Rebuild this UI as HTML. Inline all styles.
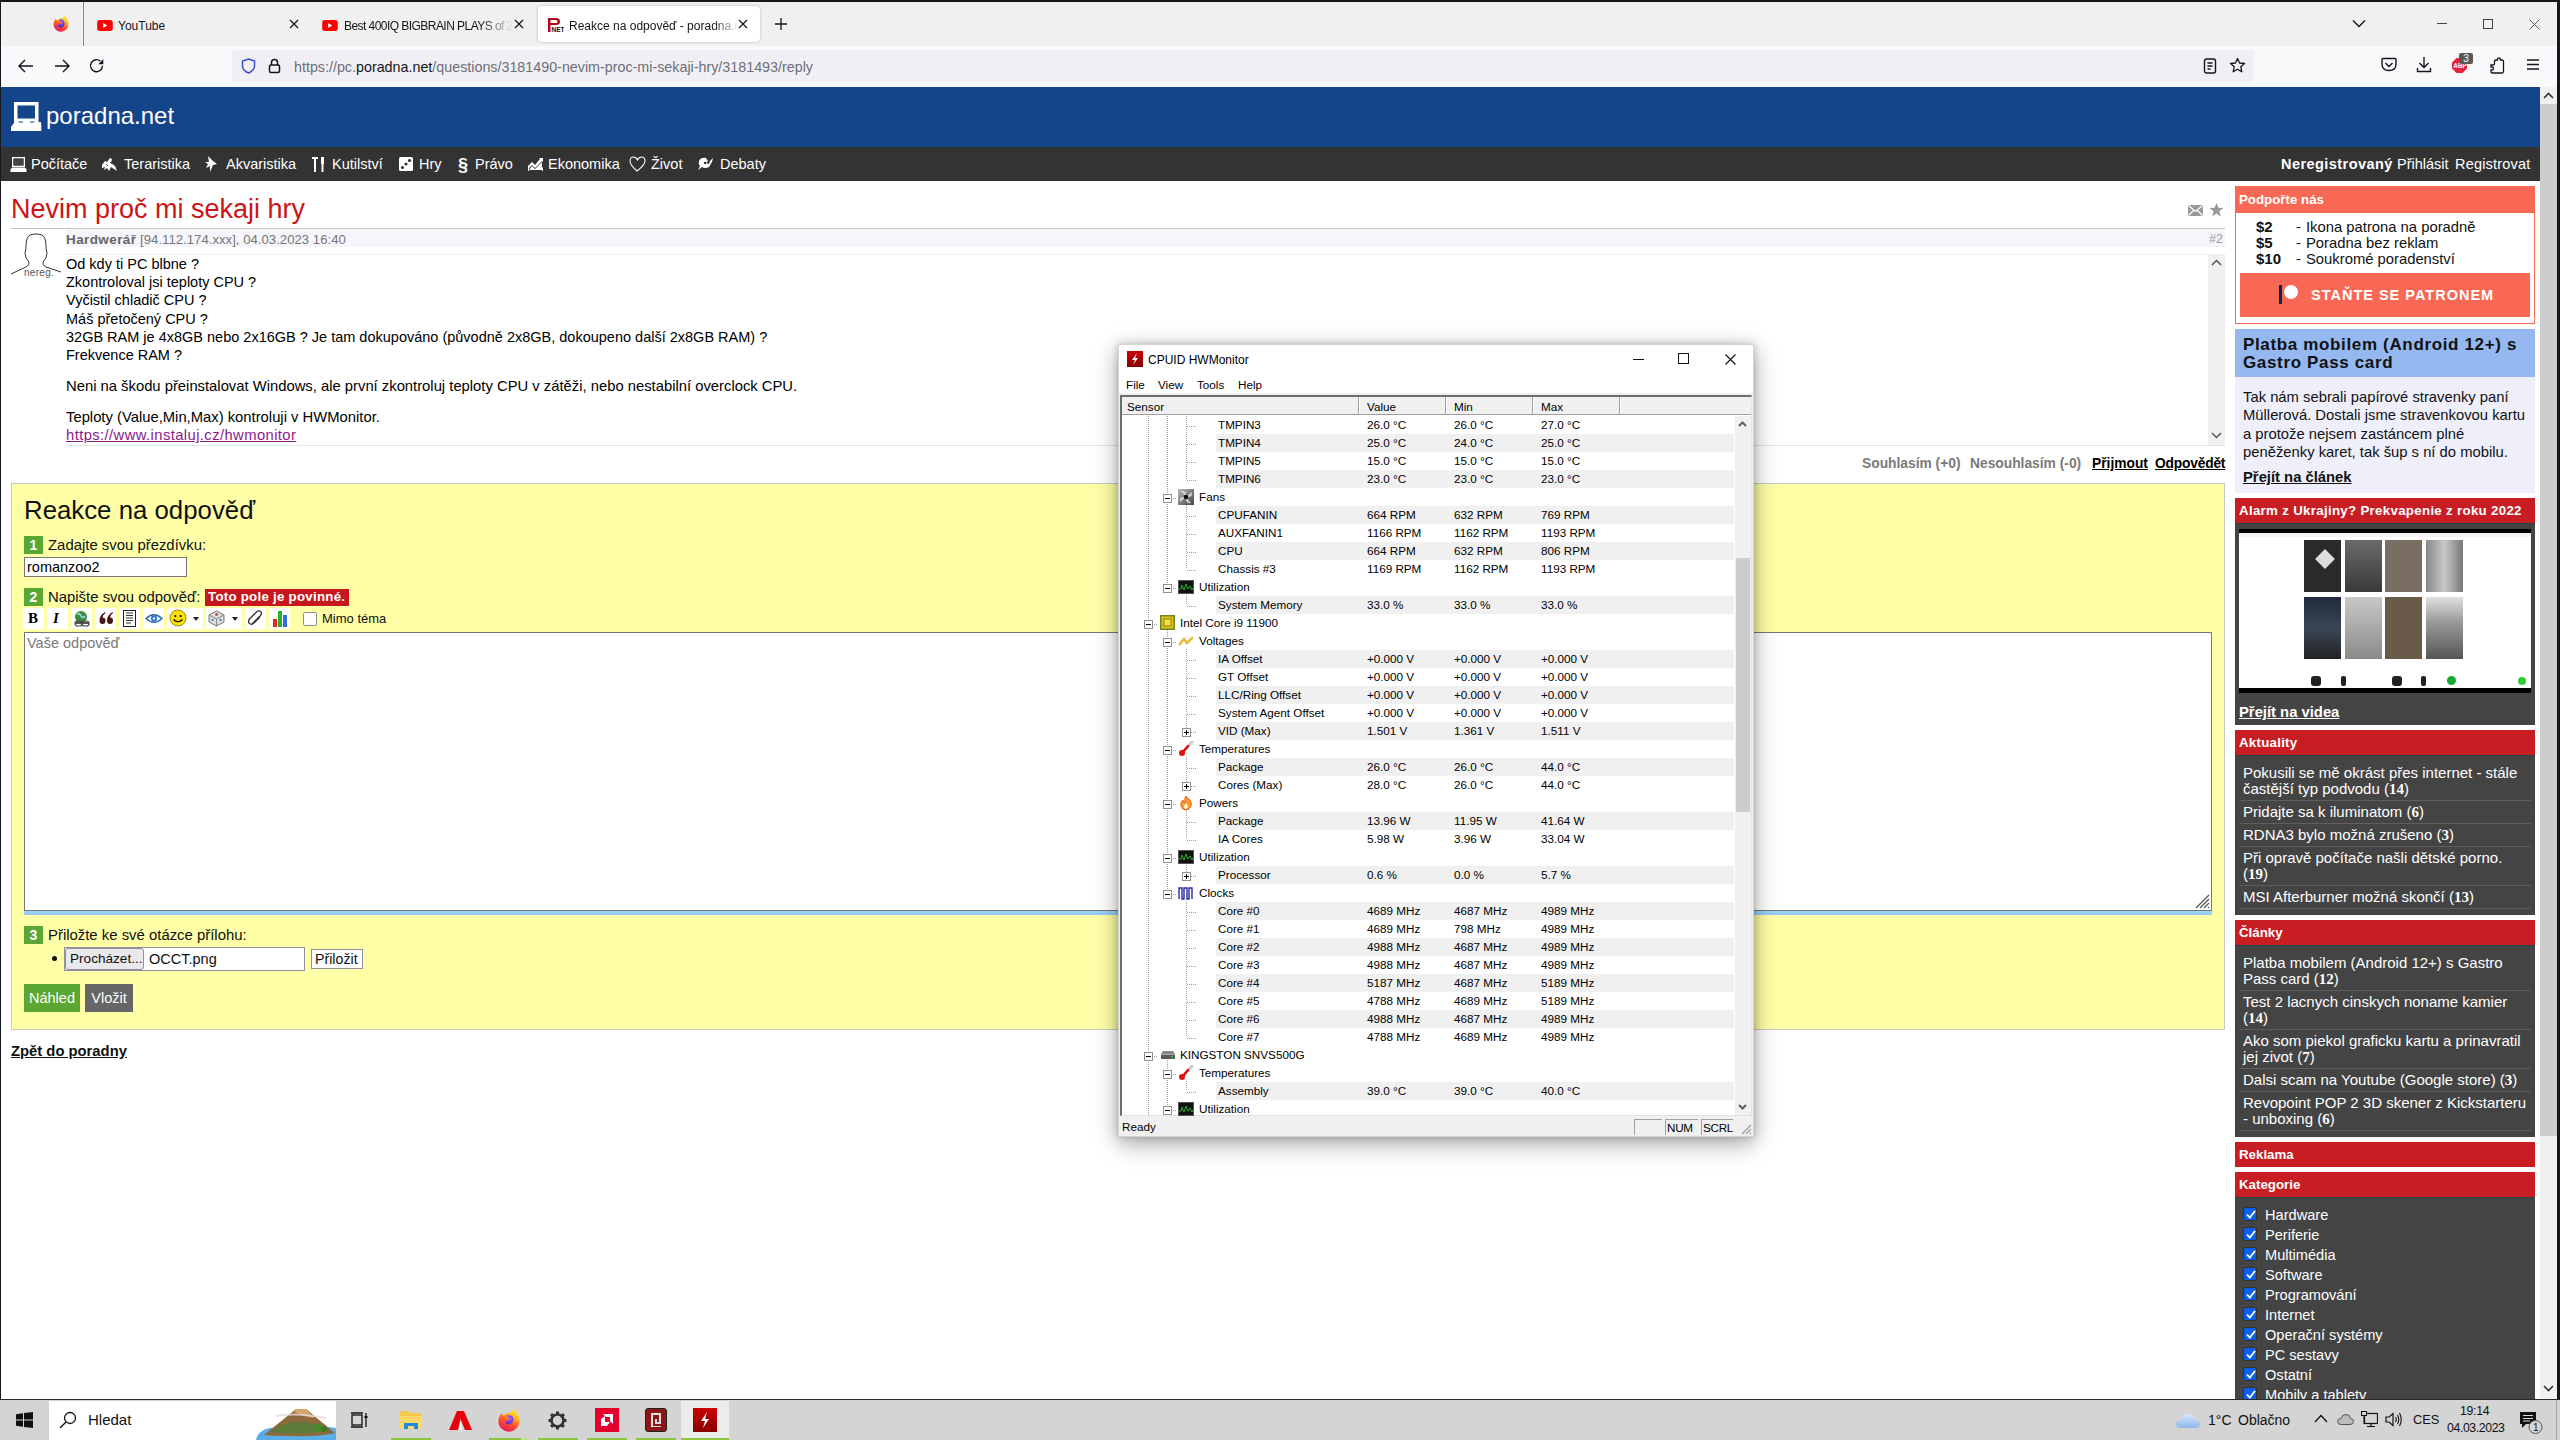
<!DOCTYPE html>
<html><head><meta charset="utf-8">
<style>
*{box-sizing:border-box}
html,body{margin:0;padding:0}
body{width:2560px;height:1440px;position:relative;overflow:hidden;background:#16161c;font-family:"Liberation Sans",sans-serif;color:#000}
.a{position:absolute}
.nw{white-space:nowrap}
.num{width:19px;height:18px;background:#5ba733;color:#fff;font-family:"Liberation Sans",sans-serif;font-weight:bold;font-size:14px;line-height:18px;text-align:center}
/* chrome */
#tabbar{left:1px;top:2px;width:2556px;height:44px;background:#f0f0f0}
#toolbar{left:1px;top:46px;width:2556px;height:41px;background:#f9f9fb}
#urlbar{left:232px;top:50px;width:2022px;height:32px;background:#f0f0f4;border-radius:4px}
.tabt{font-size:12px;color:#15141a;line-height:16px}
#page{left:1px;top:87px;width:2539px;height:1313px;background:#fff;overflow:hidden}
#vscroll{left:2540px;top:87px;width:17px;height:1313px;background:#f0f0f0}
#taskbar{left:0;top:1400px;width:2560px;height:40px;background:#d4d4d4}
/* page */
.sh{color:#fff;font-weight:bold;font-size:13.3px;line-height:25px;padding-left:4px}
.si{left:2243px;font-size:15px;line-height:16px;color:#fff}
.si b{font-family:"Liberation Serif",serif;font-size:15px}
.tl{left:2235px;width:300px;height:1px;background:#1e4848}
.sep{left:2239px;width:292px;height:1px;background:#5e5e5e}
.cb{left:2243px;width:14px;height:14px;background:#0b5ff0;border-radius:2px;border:1px solid #3b3020;padding:2px 0 0 1.5px;line-height:0}
.ct{left:2265px;font-size:14.6px;line-height:18px;color:#fff}
.v{font-family:"Liberation Sans",sans-serif;font-size:14.5px}
#hdr{left:0;top:0;width:2539px;height:60px;background:#14458a}
#nav{left:0;top:60px;width:2539px;height:34px;background:#333}
.navi{color:#fff;top:9px;font-size:14.5px}
</style></head>
<body>
<!-- firefox window -->

<div id="tabbar" class="a">
  <!-- firefox view icon -->
  <svg class="a" style="left:52px;top:13px" width="16" height="17" viewBox="0 0 16 17">
    <defs><linearGradient id="ffa" x1="0.85" y1="0" x2="0.35" y2="1"><stop offset="0" stop-color="#fff23a"/><stop offset="0.3" stop-color="#ffc020"/><stop offset="0.6" stop-color="#ff5a2a"/><stop offset="1" stop-color="#e8145a"/></linearGradient>
    <radialGradient id="ffb" cx="0.55" cy="0.35" r="0.7"><stop offset="0" stop-color="#b060ff"/><stop offset="1" stop-color="#2020d8"/></radialGradient></defs>
    <path d="M11 0.5Q15.5 4 15.5 9A7.5 7.5 0 0 1 0.5 9.5Q0.5 6 3 3.5Q3 5 4.5 5.5Q6 3 9 3.5Q11 2.5 11 0.5Z" fill="url(#ffa)"/>
    <path d="M6 4.5Q9.5 3.5 11 6Q12.2 8.5 11 10.8Q9.5 12.8 7 12.3Q5 11.8 4.8 9.8Q7 9.8 8 8.8Q8.3 6.5 6 4.5Z" fill="url(#ffb)"/>
  </svg>
  <div class="a" style="left:82px;top:0;width:1px;height:44px;background:#8a8a8a"></div>
  <!-- tab1 -->
  <svg class="a" style="left:96px;top:18px" width="16" height="11" viewBox="0 0 17 12"><rect x="0" y="0" width="17" height="12" rx="3" fill="#f00"/><path d="M6.5 3.3 L11 6 L6.5 8.7Z" fill="#fff"/></svg>
  <div class="a nw tabt" style="left:117px;top:16px">YouTube</div>
  <svg class="a" style="left:288px;top:17px" width="10" height="10" viewBox="0 0 10 10"><path d="M1 1L9 9M9 1L1 9" stroke="#15141a" stroke-width="1.2"/></svg>
  <!-- tab2 -->
  <svg class="a" style="left:321px;top:18px" width="16" height="11" viewBox="0 0 17 12"><rect x="0" y="0" width="17" height="12" rx="3" fill="#f00"/><path d="M6.5 3.3 L11 6 L6.5 8.7Z" fill="#fff"/></svg>
  <div class="a nw tabt" style="left:343px;top:16px;letter-spacing:-0.55px;width:170px;overflow:hidden;-webkit-mask-image:linear-gradient(90deg,#000 80%,transparent)">Best 400IQ BIGBRAIN PLAYS of 2022</div>
  <svg class="a" style="left:513px;top:17px" width="10" height="10" viewBox="0 0 10 10"><path d="M1 1L9 9M9 1L1 9" stroke="#15141a" stroke-width="1.2"/></svg>
  <!-- active tab -->
  <div class="a" style="left:537px;top:4px;width:222px;height:36px;background:#fff;border-radius:4px;box-shadow:0 0 3px rgba(0,0,0,.25)"></div>
  <svg class="a" style="left:546px;top:15px" width="17" height="16" viewBox="0 0 17 16"><path d="M1 1H9Q13 1 13 4.5Q13 8 9 8H3.5V15H1Z M3.5 3V6H9Q10.5 6 10.5 4.5Q10.5 3 9 3Z" fill="#b3001b"/><text x="4.5" y="15" font-family="Liberation Sans" font-weight="bold" font-size="6.5" fill="#111">NET</text></svg>
  <div class="a nw tabt" style="left:568px;top:16px;width:170px;overflow:hidden;-webkit-mask-image:linear-gradient(90deg,#000 85%,transparent)">Reakce na odpověď - poradna.net</div>
  <svg class="a" style="left:737px;top:17px" width="10" height="10" viewBox="0 0 10 10"><path d="M1 1L9 9M9 1L1 9" stroke="#15141a" stroke-width="1.2"/></svg>
  <svg class="a" style="left:773px;top:15px" width="14" height="14" viewBox="0 0 14 14"><path d="M7 1V13M1 7H13" stroke="#15141a" stroke-width="1.3"/></svg>
  <!-- right controls -->
  <svg class="a" style="left:2351px;top:17px" width="14" height="9" viewBox="0 0 14 9"><path d="M1 1.5L7 7.5L13 1.5" stroke="#15141a" stroke-width="1.4" fill="none"/></svg>
  <div class="a" style="left:2436px;top:21px;width:10px;height:1px;background:#444"></div>
  <div class="a" style="left:2482px;top:17px;width:10px;height:10px;border:1px solid #444"></div>
  <svg class="a" style="left:2528px;top:17px" width="11" height="11" viewBox="0 0 11 11"><path d="M.5 .5L10.5 10.5M10.5 .5L.5 10.5" stroke="#555" stroke-width="1"/></svg>
</div>
<div id="toolbar" class="a">
  <svg class="a" style="left:17px;top:13px" width="16" height="14" viewBox="0 0 16 14"><path d="M7 1L1 7L7 13M1.2 7H15" stroke="#15141a" stroke-width="1.4" fill="none"/></svg>
  <svg class="a" style="left:53px;top:13px" width="16" height="14" viewBox="0 0 16 14"><path d="M9 1L15 7L9 13M14.8 7H1" stroke="#15141a" stroke-width="1.4" fill="none"/></svg>
  <svg class="a" style="left:88px;top:12px" width="16" height="16" viewBox="0 0 16 16"><path d="M13.5 7.8A6 6 0 1 1 11.5 3.2" stroke="#15141a" stroke-width="1.4" fill="none"/><path d="M14.3 1.2V6.2H9.3Z" fill="#15141a"/></svg>
</div>
<div id="urlbar" class="a">
  <svg class="a" style="left:9px;top:8px" width="15" height="16" viewBox="0 0 15 16"><path d="M7.5 1L13.5 3V8Q13.5 12.5 7.5 15Q1.5 12.5 1.5 8V3Z" stroke="#3f49d0" stroke-width="1.5" fill="none"/></svg>
  <svg class="a" style="left:36px;top:8px" width="13" height="16" viewBox="0 0 13 16"><path d="M3.5 7V4.5A3 3 0 0 1 9.5 4.5V7" stroke="#15141a" stroke-width="1.5" fill="none"/><rect x="1.5" y="7" width="10" height="7.5" rx="1.5" stroke="#15141a" stroke-width="1.5" fill="none"/></svg>
  <div class="a nw" style="left:62px;top:8px;font-size:14.3px;line-height:18px;color:#6e6e78">https://pc.<span style="color:#15141a">poradna.net</span>/questions/3181490-nevim-proc-mi-sekaji-hry/3181493/reply</div>
  <svg class="a" style="left:1971px;top:8px" width="14" height="16" viewBox="0 0 14 16"><rect x="1.5" y="1" width="11" height="14" rx="2" stroke="#15141a" stroke-width="1.4" fill="none"/><path d="M4.5 5H9.5M4.5 8H9.5M4.5 11H7.5" stroke="#15141a" stroke-width="1.3"/></svg>
  <svg class="a" style="left:1997px;top:7px" width="17" height="17" viewBox="0 0 17 17"><path d="M8.5 1.5L10.6 6L15.5 6.5L11.8 9.8L12.8 14.8L8.5 12.3L4.2 14.8L5.2 9.8L1.5 6.5L6.4 6Z" stroke="#15141a" stroke-width="1.3" fill="none" stroke-linejoin="round"/></svg>
</div>
<div class="a" style="left:0;top:46px;width:2560px;height:41px;pointer-events:none">
  <svg class="a" style="left:2381px;top:11px" width="16" height="15" viewBox="0 0 16 15"><path d="M2 1.5H14Q15 1.5 15 2.5V7Q15 13.5 8 13.5Q1 13.5 1 7V2.5Q1 1.5 2 1.5Z" stroke="#15141a" stroke-width="1.4" fill="none"/><path d="M4.5 6L8 9.5L11.5 6" stroke="#15141a" stroke-width="1.4" fill="none"/></svg>
  <svg class="a" style="left:2416px;top:10px" width="16" height="17" viewBox="0 0 16 17"><path d="M8 1V11M3.5 7L8 11.5L12.5 7M1.5 12V15.5H14.5V12" stroke="#15141a" stroke-width="1.4" fill="none"/></svg>
  <svg class="a" style="left:2451px;top:11px" width="19" height="18" viewBox="0 0 19 18"><path d="M5.5 1H11.5L16 5.5V11.5L11.5 16H5.5L1 11.5V5.5Z" fill="#e8203c"/><text x="2.2" y="11.3" font-family="Liberation Sans" font-weight="bold" font-size="6.5" fill="#fff">ABP</text></svg>
  <div class="a" style="left:2459px;top:7px;width:14px;height:11px;background:#595959;border-radius:2px;color:#fff;font-size:10px;line-height:11px;text-align:center">3</div>
  <svg class="a" style="left:2489px;top:11px" width="16" height="17" viewBox="0 0 16 17"><path d="M2 8H4Q5.5 8 5.5 6.5V4.5Q5.5 3 7 3H8.5V2.5Q8.5 1 10 1Q11.5 1 11.5 2.5V3H13Q14.5 3 14.5 4.5V14.5Q14.5 16 13 16H3.5Q2 16 2 14.5V13H3Q4.5 13 4.5 11.5Q4.5 10 3 10H2Z" stroke="#15141a" stroke-width="1.3" fill="none"/></svg>
  <svg class="a" style="left:2526px;top:12px" width="14" height="13" viewBox="0 0 14 13"><path d="M1 2H13M1 6.5H13M1 11H13" stroke="#15141a" stroke-width="1.4"/></svg>
</div>

<!-- ===== PAGE ===== -->
<div id="page" class="a"></div>
<div class="a" style="left:1px;top:87px;width:2539px;height:60px;background:#14458a"></div>
<svg class="a" style="left:11px;top:101px" width="31" height="31" viewBox="0 0 31 31"><path d="M3 1H27.5V21H3Z M6.5 4.5V17.5H24V4.5Z" fill="#fff" fill-rule="evenodd"/><path d="M0 30V26L3.5 21H30L30.3 26V30Z" fill="#fff"/><path d="M7.5 21H12M19 21H23.5" stroke="#14458a" stroke-width="1"/></svg>
<div class="a nw" style="left:46px;top:101px;font-size:24px;color:#fff;line-height:30px">poradna.net</div>
<div class="a" style="left:1px;top:147px;width:2539px;height:34px;background:#333"></div>
<div class="a nw" style="left:0;top:155px;color:#fff;font-size:14.5px;line-height:18px">
  <svg class="a" style="left:10px;top:1px" width="17" height="17" viewBox="0 0 17 17"><path d="M2 1H15V11H2Z M3.5 2.5V9.5H13.5V2.5Z" fill="#fff" fill-rule="evenodd"/><rect x="3.5" y="2.5" width="10" height="7" fill="#444"/><path d="M0.5 16V13.5L2 11.5H15L16.5 13.5V16Z" fill="#fff"/></svg>
  <span class="a" style="left:31px">Počítače</span>
  <svg class="a" style="left:101px;top:1px" width="17" height="16" viewBox="0 0 17 16"><path d="M1 9L4 5L6 6L9 2L11 3L10 7L14 10L16 15L13 13L10 11L8 15L6 12L3 14L4 11L1 12Z" fill="#fff"/><path d="M5 8L7 10M9 6L11 8" stroke="#555" stroke-width="1"/></svg>
  <span class="a" style="left:124px">Teraristika</span>
  <svg class="a" style="left:205px;top:1px" width="13" height="16" viewBox="0 0 13 16"><path d="M3 0L8 5L12 8L8 9L5 16L5 10L1 12L3 8L0 6L4 6Z" fill="#fff"/></svg>
  <span class="a" style="left:226px">Akvaristika</span>
  <svg class="a" style="left:312px;top:1px" width="14" height="17" viewBox="0 0 14 17"><path d="M0 1H6V3H4V16H2V3H0Z M9 1H12V8H11.5V16H9.5V8H9Z" fill="#fff"/></svg>
  <span class="a" style="left:332px">Kutilství</span>
  <svg class="a" style="left:399px;top:2px" width="14" height="14" viewBox="0 0 14 14"><rect x="0" y="0" width="14" height="14" rx="1.5" fill="#fff"/><circle cx="3.5" cy="10.5" r="1.6" fill="#333"/><circle cx="7" cy="7" r="1.6" fill="#333"/><circle cx="10.5" cy="3.5" r="1.6" fill="#333"/></svg>
  <span class="a" style="left:419px">Hry</span>
  <span class="a" style="left:458px;font-size:18px;top:1px;font-weight:bold">§</span>
  <span class="a" style="left:475px">Právo</span>
  <svg class="a" style="left:528px;top:2px" width="15" height="14" viewBox="0 0 15 14"><path d="M0 14V9L4 5L7 8L12 2L11 1H15V5L14 4L7 11L4 8L1 11V14Z M0 14H15V10L14 11V14" fill="#fff"/><path d="M1 13L4 9L7 12L14 5V13Z" fill="#fff"/></svg>
  <span class="a" style="left:548px">Ekonomika</span>
  <svg class="a" style="left:629px;top:1px" width="17" height="16" viewBox="0 0 17 16"><path d="M8.5 4Q7 1 4.5 1Q1 1 1 5Q1 9 8 15Q16 9 16 5Q16 1 12.5 1Q10 1 8.5 4Z" stroke="#fff" stroke-width="1.1" fill="none"/></svg>
  <span class="a" style="left:651px">Život</span>
  <svg class="a" style="left:697px;top:1px" width="17" height="16" viewBox="0 0 17 16"><path d="M1 14L3 10Q1 8 2 5Q4 1 9 2L11 5L9 7L12 8L13 5L16 2L15 6L12 11Q8 13 5 11Z" fill="#fff"/><circle cx="8" cy="7" r="1.2" fill="#333"/></svg>
  <span class="a" style="left:720px">Debaty</span>
  <span class="a" style="left:2281px;font-weight:bold;letter-spacing:0.45px">Neregistrovaný</span>
  <span class="a" style="left:2397px">Přihlásit</span>
  <span class="a" style="left:2455px;letter-spacing:0.2px">Registrovat</span>
</div>

<!-- title -->
<div class="a nw" style="left:11px;top:193px;font-size:27px;line-height:32px;color:#cc1417">Nevim proč mi sekaji hry</div>
<svg class="a" style="left:2188px;top:205px" width="15" height="11" viewBox="0 0 15 11"><path d="M0 0H15V11H0Z" fill="#999"/><path d="M0.5 0.5L7.5 6.5L14.5 0.5M0.5 10.5L5.5 5.5M14.5 10.5L9.5 5.5" stroke="#fff" stroke-width="1.2" fill="none"/></svg>
<svg class="a" style="left:2209px;top:203px" width="15" height="14" viewBox="0 0 15 14"><path d="M7.5 0L9.3 4.8L14.5 5.1L10.4 8.3L11.8 13.5L7.5 10.6L3.2 13.5L4.6 8.3L0.5 5.1L5.7 4.8Z" fill="#999"/></svg>
<div class="a" style="left:11px;top:228px;width:2214px;height:1px;background:#c3c3c3"></div>
<div class="a" style="left:66px;top:229px;width:2159px;height:18px;background:#f5f5fb"></div>
<div class="a nw" style="left:66px;top:232px;font-size:13.2px;line-height:16px;color:#777"><b style="color:#666;font-size:13.5px;letter-spacing:0.4px">Hardwerář</b> [94.112.174.xxx], 04.03.2023 16:40</div>
<div class="a nw" style="left:2209px;top:231px;font-size:12.5px;line-height:16px;color:#999">#2</div>
<div class="a" style="left:66px;top:254px;width:2159px;height:1px;background:#eee"></div>
<!-- avatar -->
<svg class="a" style="left:10px;top:232px" width="52" height="46" viewBox="0 0 52 46"><path d="M1 42L16 35Q20 33 19 30Q15 26 15 21Q16 18 16 14Q16 5 20 3Q23 2 26 2Q29 2 32 3Q36 5 36 14Q36 18 37 21Q37 26 33 30Q32 33 36 35L51 40" stroke="#333" stroke-width="1" fill="none"/></svg>
<div class="a nw" style="left:24px;top:267px;font-size:10px;line-height:12px;color:#555;letter-spacing:0.3px">nereg.</div>
<!-- post body -->
<div class="a nw" style="left:66px;top:255px;font-size:14.5px;line-height:18.2px;color:#000">Od kdy ti PC blbne ?<br>Zkontroloval jsi teploty CPU ?<br>Vyčistil chladič CPU ?<br>Máš přetočený CPU ?<br>32GB RAM je 4x8GB nebo 2x16GB ? Je tam dokupováno (původně 2x8GB, dokoupeno další 2x8GB RAM) ?<br>Frekvence RAM ?</div>
<div class="a nw" style="left:66px;top:377px;font-size:14.8px;line-height:18px;color:#000;letter-spacing:0px">Neni na škodu přeinstalovat Windows, ale první zkontroluj teploty CPU v zátěži, nebo nestabilní overclock CPU.</div>
<div class="a nw" style="left:66px;top:408px;font-size:14.8px;line-height:18px;color:#000">Teploty (Value,Min,Max) kontroluji v HWMonitor.<br><span style="color:#8b1a8b;text-decoration:underline;letter-spacing:0.4px">https://www.instaluj.cz/hwmonitor</span></div>
<div class="a" style="left:2208px;top:255px;width:17px;height:191px;background:#f0f0f0"></div>
<svg class="a" style="left:2211px;top:259px" width="11" height="7" viewBox="0 0 11 7"><path d="M1 6L5.5 1.5L10 6" stroke="#555" stroke-width="1.5" fill="none"/></svg>
<svg class="a" style="left:2211px;top:432px" width="11" height="7" viewBox="0 0 11 7"><path d="M1 1L5.5 5.5L10 1" stroke="#555" stroke-width="1.5" fill="none"/></svg>
<div class="a" style="left:66px;top:445px;width:2159px;height:1px;background:#e3e3e3"></div>
<div class="a nw" style="left:1862px;top:456px;font-size:13.8px;line-height:16px;font-weight:bold;color:#7a7a7a"><span class="a" style="left:0">Souhlasím (+0)</span><span class="a" style="left:108px">Nesouhlasím (-0)</span><span class="a" style="left:230px;color:#000;text-decoration:underline">Přijmout</span><span class="a" style="left:293px;color:#000;text-decoration:underline;letter-spacing:-0.2px">Odpovědět</span></div>


<!-- ===== FORM ===== -->
<div class="a" style="left:11px;top:483px;width:2214px;height:547px;background:#ffffa8;border:1px solid #c8c8c8"></div>
<div class="a nw" style="left:24px;top:495px;font-size:25.8px;line-height:30px;color:#111">Reakce na odpověď</div>
<div class="a num" style="left:24px;top:536px">1</div>
<div class="a nw" style="left:48px;top:536px;font-size:14.9px;line-height:18px;color:#111">Zadajte svou přezdívku:</div>
<div class="a" style="left:24px;top:557px;width:163px;height:20px;background:#fff;border:1px solid #767676"></div>
<div class="a nw" style="left:27px;top:558px;font-size:14.5px;line-height:18px;color:#000">romanzoo2</div>
<div class="a num" style="left:24px;top:588px">2</div>
<div class="a nw" style="left:48px;top:588px;font-size:14.9px;line-height:18px;color:#111">Napište svou odpověď:</div>
<div class="a nw" style="left:205px;top:589px;width:144px;height:17px;background:#c8161d;color:#fff;font-weight:bold;font-size:13.3px;line-height:16px;padding-left:3px;letter-spacing:0.25px;overflow:hidden">Toto pole je povinné.</div>
<!-- editor toolbar -->
<div class="a" style="left:23px;top:608px;width:21px;height:21px;background:#fff"></div>
<div class="a" style="left:47px;top:608px;width:21px;height:21px;background:#fff"></div>
<div class="a" style="left:71px;top:608px;width:21px;height:21px;background:#fff"></div>
<div class="a" style="left:95px;top:608px;width:21px;height:21px;background:#fff"></div>
<div class="a" style="left:119px;top:608px;width:21px;height:21px;background:#fff"></div>
<div class="a" style="left:143px;top:608px;width:21px;height:21px;background:#fff"></div>
<div class="a" style="left:167px;top:608px;width:36px;height:21px;background:#fff"></div>
<div class="a" style="left:206px;top:608px;width:36px;height:21px;background:#fff"></div>
<div class="a" style="left:245px;top:608px;width:21px;height:21px;background:#fff"></div>
<div class="a" style="left:269px;top:608px;width:21px;height:21px;background:#fff"></div>
<div class="a nw" style="left:28px;top:610px;font-family:'Liberation Serif',serif;font-weight:bold;font-size:15px;line-height:17px">B</div>
<div class="a nw" style="left:53px;top:610px;font-family:'Liberation Serif',serif;font-weight:bold;font-style:italic;font-size:15px;line-height:17px">I</div>
<svg class="a" style="left:73px;top:610px" width="18" height="18" viewBox="0 0 18 18"><circle cx="8" cy="7" r="6" fill="#3a8f3a"/><path d="M4 4Q7 3 8 6Q10 9 12 6" stroke="#9fd3ff" stroke-width="1.5" fill="none"/><path d="M3 13H8M10 13H15" stroke="#555" stroke-width="2.2" stroke-linecap="round"/><rect x="2" y="11" width="7" height="5" rx="2.5" stroke="#444" stroke-width="1.2" fill="none"/><rect x="9" y="11" width="7" height="5" rx="2.5" stroke="#444" stroke-width="1.2" fill="none"/></svg>
<svg class="a" style="left:99px;top:611px" width="15" height="14" viewBox="0 0 15 14"><path d="M3.5 13Q0.5 13 0.5 9.5Q0.5 4 6 1L6.5 2Q3.5 4 3.5 6.5Q6.5 6.5 6.5 9.5Q6.5 13 3.5 13Z M11 13Q8 13 8 9.5Q8 4 13.5 1L14 2Q11 4 11 6.5Q14 6.5 14 9.5Q14 13 11 13Z" fill="#4a1616"/></svg>
<svg class="a" style="left:123px;top:610px" width="13" height="17" viewBox="0 0 13 17"><rect x="0.5" y="0.5" width="12" height="16" fill="#fff" stroke="#222"/><path d="M3 3H10M3 5.5H10M3 8H10M3 10.5H10M3 13H8" stroke="#333" stroke-width="1"/></svg>
<svg class="a" style="left:145px;top:613px" width="18" height="11" viewBox="0 0 18 11"><path d="M1 5.5Q9 -2 17 5.5Q9 13 1 5.5Z" fill="#dff" stroke="#3465a4" stroke-width="1.3"/><circle cx="9" cy="5.5" r="3" fill="#2a6dd6"/><circle cx="9" cy="5.5" r="1.2" fill="#fff"/></svg>
<svg class="a" style="left:169px;top:609px" width="18" height="18" viewBox="0 0 18 18"><circle cx="9" cy="9" r="8" fill="#ffe000" stroke="#8a7000" stroke-width="0.8"/><circle cx="6.3" cy="7" r="1.1" fill="#000"/><circle cx="11.7" cy="7" r="1.1" fill="#000"/><path d="M4.5 10.5Q9 15 13.5 10.5" stroke="#000" stroke-width="1.1" fill="none"/></svg>
<svg class="a" style="left:193px;top:617px" width="6" height="4" viewBox="0 0 6 4"><path d="M0 0H6L3 4Z" fill="#222"/></svg>
<svg class="a" style="left:208px;top:610px" width="17" height="17" viewBox="0 0 17 17"><path d="M8.5 1L16 5V12L8.5 16L1 12V5Z" fill="#ddd" stroke="#555" stroke-width="0.8"/><path d="M1 5L8.5 9L16 5M8.5 9V16" stroke="#777" stroke-width="0.8" fill="none"/><circle cx="8.5" cy="4.5" r="1.3" fill="#d22"/><circle cx="4.5" cy="10" r="1" fill="#36c"/><circle cx="12.5" cy="10" r="1" fill="#36c"/></svg>
<svg class="a" style="left:232px;top:617px" width="6" height="4" viewBox="0 0 6 4"><path d="M0 0H6L3 4Z" fill="#222"/></svg>
<svg class="a" style="left:247px;top:610px" width="17" height="17" viewBox="0 0 17 17"><path d="M4 15L13.5 5.5Q15.5 3 13.5 1.5Q11.5 0 9.5 2L2.5 9Q0.5 11.5 2.5 13.5Q4.5 15 7 13L13 7" stroke="#333" stroke-width="1.3" fill="none"/></svg>
<svg class="a" style="left:272px;top:610px" width="16" height="17" viewBox="0 0 16 17"><rect x="1" y="9" width="4" height="8" fill="#e02b1f"/><rect x="6" y="1" width="4" height="16" fill="#28b228"/><rect x="11" y="5" width="4" height="12" fill="#2d6fe0"/></svg>
<div class="a" style="left:303px;top:612px;width:14px;height:14px;border:1.5px solid #8f8f9d;border-radius:2px;background:#fff"></div>
<div class="a nw" style="left:322px;top:611px;font-size:13px;line-height:16px;color:#111">Mimo téma</div>
<!-- textarea -->
<div class="a" style="left:24px;top:632px;width:2188px;height:279px;background:#fff;border:1px solid #767676"></div>
<div class="a nw" style="left:27px;top:634px;font-size:14.5px;line-height:18px;color:#7a7a7a">Vaše odpověď</div>
<svg class="a" style="left:2195px;top:894px" width="15" height="15" viewBox="0 0 15 15"><path d="M14 1L1 14M14 5L5 14M14 9L9 14M14 13L13 14" stroke="#555" stroke-width="1.3"/></svg>
<div class="a" style="left:24px;top:911px;width:2188px;height:4px;background:linear-gradient(#9ad6fb,#98c8f9)"></div>
<div class="a num" style="left:24px;top:926px">3</div>
<div class="a nw" style="left:48px;top:926px;font-size:14.9px;line-height:18px;color:#111">Přiložte ke své otázce přílohu:</div>
<div class="a" style="left:52px;top:956px;width:5px;height:5px;border-radius:50%;background:#111"></div>
<div class="a" style="left:64px;top:947px;width:241px;height:24px;background:#fff;border:1px solid #8f8f9d"></div>
<div class="a" style="left:65px;top:948px;width:79px;height:22px;background:#e9e9ed;border:1px solid #8f8f9d;border-radius:3px"></div>
<div class="a nw" style="left:70px;top:950px;font-size:13.6px;line-height:18px;color:#111">Procházet...</div>
<div class="a nw" style="left:149px;top:950px;font-size:14.5px;line-height:18px;color:#111">OCCT.png</div>
<div class="a" style="left:311px;top:949px;width:52px;height:20px;background:#fff;border:1px solid #8f8f9d"></div>
<div class="a nw" style="left:315px;top:950px;font-size:14.2px;line-height:18px;color:#111">Přiložit</div>
<div class="a nw" style="left:24px;top:984px;width:56px;height:28px;background:#5ba733;color:#fff;font-size:14.5px;line-height:28px;text-align:center">Náhled</div>
<div class="a nw" style="left:85px;top:984px;width:48px;height:28px;background:#666;color:#fff;font-size:14.5px;line-height:28px;text-align:center">Vložit</div>
<div class="a nw" style="left:11px;top:1042px;font-size:14.8px;line-height:18px;font-weight:bold;color:#111;text-decoration:underline">Zpět do poradny</div>


<!-- ===== SIDEBAR ===== -->
<div class="a" style="left:2235px;top:186px;width:300px;height:138px;border:1px solid #f96854;background:#fff"></div>
<div class="a nw sh" style="left:2235px;top:187px;width:300px;height:26px;background:#f96854">Podpořte nás</div>
<div class="a nw" style="left:2256px;top:219px;font-size:14.8px;line-height:16px;color:#111">
<b class="a" style="left:0;top:0;font-size:15px">$2</b><span class="a" style="left:40px;top:0">-</span><span class="a" style="left:50px;top:0">Ikona patrona na poradně</span>
<b class="a" style="left:0;top:16px;font-size:15px">$5</b><span class="a" style="left:40px;top:16px">-</span><span class="a" style="left:50px;top:16px">Poradna bez reklam</span>
<b class="a" style="left:0;top:32px;font-size:15px">$10</b><span class="a" style="left:40px;top:32px">-</span><span class="a" style="left:50px;top:32px">Soukromé poradenství</span>
</div>
<div class="a" style="left:2240px;top:273px;width:290px;height:44px;background:#f96854"></div>
<div class="a" style="left:2279px;top:285px;width:3px;height:19px;background:#052d49"></div>
<div class="a" style="left:2284px;top:285px;width:14px;height:14px;border-radius:50%;background:#fff"></div>
<div class="a nw" style="left:2311px;top:286px;font-size:14.5px;line-height:18px;font-weight:bold;color:#fff;letter-spacing:1px">STAŇTE SE PATRONEM</div>

<div class="a" style="left:2235px;top:329px;width:300px;height:48px;background:#94b8ef"></div>
<div class="a nw" style="left:2243px;top:336px;font-size:17px;line-height:18px;font-weight:bold;color:#111;letter-spacing:0.65px">Platba mobilem (Android 12+) s<br>Gastro Pass card</div>
<div class="a" style="left:2235px;top:377px;width:300px;height:116px;background:#efeffb"></div>
<div class="a nw" style="left:2243px;top:388px;font-size:14.8px;line-height:18.3px;color:#111">Tak nám sebrali papírové stravenky paní<br>Müllerová. Dostali jsme stravenkovou kartu<br>a protože nejsem zastáncem plné<br>peněženky karet, tak šup s ní do mobilu.</div>
<div class="a nw" style="left:2243px;top:468px;font-size:14.8px;line-height:18px;font-weight:bold;color:#111;text-decoration:underline">Přejít na článek</div>

<div class="a nw sh" style="left:2235px;top:498px;width:300px;height:25px;background:#c81e23;letter-spacing:0.3px">Alarm z Ukrajiny? Prekvapenie z roku 2022</div>
<div class="a" style="left:2235px;top:523px;width:300px;height:202px;background:#444"></div><div class="a tl" style="top:523px"></div>
<div class="a" style="left:2239px;top:529px;width:292px;height:164px;background:#000"></div>
<div class="a" style="left:2239px;top:533px;width:292px;height:155px;background:#fff"></div>
<div class="a" style="left:2239px;top:533px;width:292px;height:4px;background:#f4f4f4"></div>
<div class="a" style="left:2304px;top:540px;width:37px;height:52px;background:#2a2a2a"></div>
<div class="a" style="left:2345px;top:540px;width:37px;height:52px;background:linear-gradient(#6a6a68,#3a3a38)"></div>
<div class="a" style="left:2385px;top:540px;width:37px;height:52px;background:#7a6e62"></div>
<div class="a" style="left:2426px;top:540px;width:37px;height:52px;background:linear-gradient(90deg,#888,#c8c8c8 50%,#777)"></div>
<div class="a" style="left:2304px;top:597px;width:37px;height:62px;background:linear-gradient(#1e2a3a,#3a4658 50%,#222)"></div>
<div class="a" style="left:2345px;top:597px;width:37px;height:62px;background:linear-gradient(#c8c8c6,#8a8a88)"></div>
<div class="a" style="left:2385px;top:597px;width:37px;height:62px;background:#6a5a4a"></div>
<div class="a" style="left:2426px;top:597px;width:37px;height:62px;background:linear-gradient(#e0e0e0,#9a9a98 40%,#555)"></div>
<div class="a" style="left:2318px;top:552px;width:14px;height:14px;background:#ddd;transform:rotate(45deg)"></div>
<div class="a" style="left:2311px;top:676px;width:10px;height:10px;background:#222;border-radius:3px"></div>
<div class="a" style="left:2341px;top:676px;width:5px;height:10px;background:#222;border-radius:2px"></div>
<div class="a" style="left:2392px;top:676px;width:10px;height:10px;background:#222;border-radius:3px"></div>
<div class="a" style="left:2421px;top:676px;width:5px;height:10px;background:#222;border-radius:2px"></div>
<div class="a" style="left:2447px;top:676px;width:9px;height:9px;background:#1a3;border-radius:50%"></div>
<div class="a" style="left:2518px;top:677px;width:8px;height:8px;background:#3c3;border-radius:50%"></div>
<div class="a nw" style="left:2239px;top:703px;font-size:14.8px;line-height:18px;font-weight:bold;color:#fff;text-decoration:underline">Přejít na videa</div>

<div class="a nw sh" style="left:2235px;top:730px;width:300px;height:25px;background:#c81e23;letter-spacing:0.25px">Aktuality</div>
<div class="a" style="left:2235px;top:755px;width:300px;height:160px;background:#444"></div><div class="a tl" style="top:755px"></div>
<div class="a nw si" style="top:765px">Pokusili se mě okrást přes internet - stále<br>častější typ podvodu (<b>14</b>)</div>
<div class="a sep" style="top:800px"></div>
<div class="a nw si" style="top:804px">Pridajte sa k iluminatom (<b>6</b>)</div>
<div class="a sep" style="top:823px"></div>
<div class="a nw si" style="top:827px">RDNA3 bylo možná zrušeno (<b>3</b>)</div>
<div class="a sep" style="top:846px"></div>
<div class="a nw si" style="top:850px">Při opravě počítače našli dětské porno.<br>(<b>19</b>)</div>
<div class="a sep" style="top:885px"></div>
<div class="a nw si" style="top:889px">MSI Afterburner možná skončí (<b>13</b>)</div>
<div class="a sep" style="top:908px"></div>

<div class="a nw sh" style="left:2235px;top:920px;width:300px;height:25px;background:#c81e23">Články</div>
<div class="a" style="left:2235px;top:945px;width:300px;height:192px;background:#444"></div><div class="a tl" style="top:945px"></div>
<div class="a nw si" style="top:955px">Platba mobilem (Android 12+) s Gastro<br>Pass card (<b>12</b>)</div>
<div class="a sep" style="top:990px"></div>
<div class="a nw si" style="top:994px">Test 2 lacnych cinskych noname kamier<br>(<b>14</b>)</div>
<div class="a sep" style="top:1029px"></div>
<div class="a nw si" style="top:1033px">Ako som piekol graficku kartu a prinavratil<br>jej zivot (<b>7</b>)</div>
<div class="a sep" style="top:1068px"></div>
<div class="a nw si" style="top:1072px">Dalsi scam na Youtube (Google store) (<b>3</b>)</div>
<div class="a sep" style="top:1091px"></div>
<div class="a nw si" style="top:1095px">Revopoint POP 2 3D skener z Kickstarteru<br>- unboxing (<b>6</b>)</div>
<div class="a sep" style="top:1130px"></div>

<div class="a nw sh" style="left:2235px;top:1142px;width:300px;height:25px;background:#c81e23">Reklama</div>
<div class="a nw sh" style="left:2235px;top:1172px;width:300px;height:25px;background:#c81e23">Kategorie</div>
<div class="a" style="left:2235px;top:1197px;width:300px;height:203px;background:#444"></div><div class="a tl" style="top:1197px"></div>
<div class="a cb" style="top:1207px"><svg width="10" height="9" viewBox="0 0 10 9"><path d="M1 4.5L3.8 7.5L9 1" stroke="#fff" stroke-width="1.8" fill="none"/></svg></div><div class="a nw ct" style="top:1206px">Hardware</div>
<div class="a cb" style="top:1227px"><svg width="10" height="9" viewBox="0 0 10 9"><path d="M1 4.5L3.8 7.5L9 1" stroke="#fff" stroke-width="1.8" fill="none"/></svg></div><div class="a nw ct" style="top:1226px">Periferie</div>
<div class="a cb" style="top:1247px"><svg width="10" height="9" viewBox="0 0 10 9"><path d="M1 4.5L3.8 7.5L9 1" stroke="#fff" stroke-width="1.8" fill="none"/></svg></div><div class="a nw ct" style="top:1246px">Multimédia</div>
<div class="a cb" style="top:1267px"><svg width="10" height="9" viewBox="0 0 10 9"><path d="M1 4.5L3.8 7.5L9 1" stroke="#fff" stroke-width="1.8" fill="none"/></svg></div><div class="a nw ct" style="top:1266px">Software</div>
<div class="a cb" style="top:1287px"><svg width="10" height="9" viewBox="0 0 10 9"><path d="M1 4.5L3.8 7.5L9 1" stroke="#fff" stroke-width="1.8" fill="none"/></svg></div><div class="a nw ct" style="top:1286px">Programování</div>
<div class="a cb" style="top:1307px"><svg width="10" height="9" viewBox="0 0 10 9"><path d="M1 4.5L3.8 7.5L9 1" stroke="#fff" stroke-width="1.8" fill="none"/></svg></div><div class="a nw ct" style="top:1306px">Internet</div>
<div class="a cb" style="top:1327px"><svg width="10" height="9" viewBox="0 0 10 9"><path d="M1 4.5L3.8 7.5L9 1" stroke="#fff" stroke-width="1.8" fill="none"/></svg></div><div class="a nw ct" style="top:1326px">Operační systémy</div>
<div class="a cb" style="top:1347px"><svg width="10" height="9" viewBox="0 0 10 9"><path d="M1 4.5L3.8 7.5L9 1" stroke="#fff" stroke-width="1.8" fill="none"/></svg></div><div class="a nw ct" style="top:1346px">PC sestavy</div>
<div class="a cb" style="top:1367px"><svg width="10" height="9" viewBox="0 0 10 9"><path d="M1 4.5L3.8 7.5L9 1" stroke="#fff" stroke-width="1.8" fill="none"/></svg></div><div class="a nw ct" style="top:1366px">Ostatní</div>
<div class="a cb" style="top:1387px"><svg width="10" height="9" viewBox="0 0 10 9"><path d="M1 4.5L3.8 7.5L9 1" stroke="#fff" stroke-width="1.8" fill="none"/></svg></div><div class="a nw ct" style="top:1386px">Mobily a tablety</div>
<div class="a cb" style="top:1407px"><svg width="10" height="9" viewBox="0 0 10 9"><path d="M1 4.5L3.8 7.5L9 1" stroke="#fff" stroke-width="1.8" fill="none"/></svg></div><div class="a nw ct" style="top:1406px">Hry</div>

<div id="vscroll" class="a">
  <svg class="a" style="left:3px;top:5px" width="11" height="7" viewBox="0 0 11 7"><path d="M1 6L5.5 1.5L10 6" stroke="#333" stroke-width="1.6" fill="none"/></svg>
  <div class="a" style="left:0;top:17px;width:17px;height:1032px;background:#cdcdcd"></div>
  <svg class="a" style="left:3px;top:1298px" width="11" height="7" viewBox="0 0 11 7"><path d="M1 1L5.5 5.5L10 1" stroke="#333" stroke-width="1.6" fill="none"/></svg>
</div>
<div class="a" style="left:0;top:1399px;width:2560px;height:1px;background:#2a2a2a"></div>
<!--HWM-->
<div class="a" id="hwm" style="left:1118px;top:344px;width:636px;height:793px;background:#fff;border:1px solid #d4d4d4;box-shadow:0 6px 22px rgba(0,0,0,.38),0 0 6px rgba(0,0,0,.18);font-size:11.7px;color:#000;overflow:hidden">
<svg class="a" style="left:8px;top:6px" width="16" height="16" viewBox="0 0 16 16"><defs><linearGradient id="hg" x1="0" y1="0" x2="0" y2="1"><stop offset="0" stop-color="#c00"/><stop offset="1" stop-color="#800"/></linearGradient></defs><rect width="16" height="16" fill="url(#hg)"/><path d="M10 2L5 9H8L6 14L11 7H8Z" fill="#fff"/></svg>
<div class="a nw" style="left:29px;top:7px;line-height:16px;font-size:12px">CPUID HWMonitor</div>
<div class="a" style="left:514px;top:14px;width:11px;height:1px;background:#111"></div>
<div class="a" style="left:559px;top:8px;width:11px;height:11px;border:1px solid #111"></div>
<svg class="a" style="left:606px;top:9px" width="11" height="11" viewBox="0 0 11 11"><path d="M.5 .5L10.5 10.5M10.5 .5L.5 10.5" stroke="#111" stroke-width="1.15"/></svg>
<div class="a nw" style="left:7px;top:32px;line-height:16px">File</div>
<div class="a nw" style="left:39px;top:32px;line-height:16px">View</div>
<div class="a nw" style="left:78px;top:32px;line-height:16px">Tools</div>
<div class="a nw" style="left:119px;top:32px;line-height:16px">Help</div>
<div class="a" style="left:0px;top:48px;width:634px;height:744px;background:#f0f0f0"></div>
<div class="a" style="left:1px;top:50px;width:632px;height:721px;background:#fff;border-top:2px solid #6d6d6d;border-left:2px solid #6d6d6d;border-right:1px solid #e3e3e3;border-bottom:1px solid #e3e3e3"></div>
<div class="a" style="left:3px;top:52px;width:629px;height:18px;background:#f0f0f0;border-bottom:1px solid #a0a0a0"></div>
<div class="a" style="left:239px;top:52px;width:1px;height:17px;background:#a0a0a0"></div><div class="a" style="left:240px;top:52px;width:1px;height:17px;background:#fff"></div>
<div class="a" style="left:326px;top:52px;width:1px;height:17px;background:#a0a0a0"></div><div class="a" style="left:327px;top:52px;width:1px;height:17px;background:#fff"></div>
<div class="a" style="left:413px;top:52px;width:1px;height:17px;background:#a0a0a0"></div><div class="a" style="left:414px;top:52px;width:1px;height:17px;background:#fff"></div>
<div class="a" style="left:500px;top:52px;width:1px;height:17px;background:#a0a0a0"></div><div class="a" style="left:501px;top:52px;width:1px;height:17px;background:#fff"></div>
<div class="a nw" style="left:8px;top:54px;line-height:16px">Sensor</div>
<div class="a nw" style="left:248px;top:54px;line-height:16px">Value</div>
<div class="a nw" style="left:335px;top:54px;line-height:16px">Min</div>
<div class="a nw" style="left:422px;top:54px;line-height:16px">Max</div>
<div class="a" style="left:97px;top:89px;width:518px;height:18px;background:#f0f0f0"></div>
<div class="a" style="left:97px;top:125px;width:518px;height:18px;background:#f0f0f0"></div>
<div class="a" style="left:97px;top:161px;width:518px;height:18px;background:#f0f0f0"></div>
<div class="a" style="left:97px;top:197px;width:518px;height:18px;background:#f0f0f0"></div>
<div class="a" style="left:97px;top:251px;width:518px;height:18px;background:#f0f0f0"></div>
<div class="a" style="left:97px;top:305px;width:518px;height:18px;background:#f0f0f0"></div>
<div class="a" style="left:97px;top:341px;width:518px;height:18px;background:#f0f0f0"></div>
<div class="a" style="left:97px;top:377px;width:518px;height:18px;background:#f0f0f0"></div>
<div class="a" style="left:97px;top:413px;width:518px;height:18px;background:#f0f0f0"></div>
<div class="a" style="left:97px;top:467px;width:518px;height:18px;background:#f0f0f0"></div>
<div class="a" style="left:97px;top:521px;width:518px;height:18px;background:#f0f0f0"></div>
<div class="a" style="left:97px;top:557px;width:518px;height:18px;background:#f0f0f0"></div>
<div class="a" style="left:97px;top:593px;width:518px;height:18px;background:#f0f0f0"></div>
<div class="a" style="left:97px;top:629px;width:518px;height:18px;background:#f0f0f0"></div>
<div class="a" style="left:97px;top:665px;width:518px;height:18px;background:#f0f0f0"></div>
<div class="a" style="left:97px;top:737px;width:518px;height:18px;background:#f0f0f0"></div>
<div class="a" style="left:29px;top:71px;width:1px;height:699px;background:repeating-linear-gradient(#a0a0a0 0 1px,transparent 1px 2px)"></div>
<div class="a" style="left:48px;top:71px;width:1px;height:171px;background:repeating-linear-gradient(#a0a0a0 0 1px,transparent 1px 2px)"></div>
<div class="a" style="left:48px;top:283px;width:1px;height:265px;background:repeating-linear-gradient(#a0a0a0 0 1px,transparent 1px 2px)"></div>
<div class="a" style="left:48px;top:715px;width:1px;height:55px;background:repeating-linear-gradient(#a0a0a0 0 1px,transparent 1px 2px)"></div>
<div class="a" style="left:67px;top:71px;width:1px;height:63px;background:repeating-linear-gradient(#a0a0a0 0 1px,transparent 1px 2px)"></div>
<div class="a" style="left:67px;top:160px;width:1px;height:64px;background:repeating-linear-gradient(#a0a0a0 0 1px,transparent 1px 2px)"></div>
<div class="a" style="left:67px;top:250px;width:1px;height:10px;background:repeating-linear-gradient(#a0a0a0 0 1px,transparent 1px 2px)"></div>
<div class="a" style="left:67px;top:304px;width:1px;height:82px;background:repeating-linear-gradient(#a0a0a0 0 1px,transparent 1px 2px)"></div>
<div class="a" style="left:67px;top:412px;width:1px;height:28px;background:repeating-linear-gradient(#a0a0a0 0 1px,transparent 1px 2px)"></div>
<div class="a" style="left:67px;top:466px;width:1px;height:28px;background:repeating-linear-gradient(#a0a0a0 0 1px,transparent 1px 2px)"></div>
<div class="a" style="left:67px;top:520px;width:1px;height:10px;background:repeating-linear-gradient(#a0a0a0 0 1px,transparent 1px 2px)"></div>
<div class="a" style="left:67px;top:556px;width:1px;height:136px;background:repeating-linear-gradient(#a0a0a0 0 1px,transparent 1px 2px)"></div>
<div class="a" style="left:67px;top:736px;width:1px;height:10px;background:repeating-linear-gradient(#a0a0a0 0 1px,transparent 1px 2px)"></div>
<div class="a" style="left:68px;top:81px;width:10px;height:1px;background:repeating-linear-gradient(90deg,#a0a0a0 0 1px,transparent 1px 2px)"></div>
<div class="a" style="left:68px;top:99px;width:10px;height:1px;background:repeating-linear-gradient(90deg,#a0a0a0 0 1px,transparent 1px 2px)"></div>
<div class="a" style="left:68px;top:117px;width:10px;height:1px;background:repeating-linear-gradient(90deg,#a0a0a0 0 1px,transparent 1px 2px)"></div>
<div class="a" style="left:68px;top:135px;width:10px;height:1px;background:repeating-linear-gradient(90deg,#a0a0a0 0 1px,transparent 1px 2px)"></div>
<div class="a" style="left:48px;top:153px;width:10px;height:1px;background:repeating-linear-gradient(90deg,#a0a0a0 0 1px,transparent 1px 2px)"></div>
<div class="a" style="left:68px;top:171px;width:10px;height:1px;background:repeating-linear-gradient(90deg,#a0a0a0 0 1px,transparent 1px 2px)"></div>
<div class="a" style="left:68px;top:189px;width:10px;height:1px;background:repeating-linear-gradient(90deg,#a0a0a0 0 1px,transparent 1px 2px)"></div>
<div class="a" style="left:68px;top:207px;width:10px;height:1px;background:repeating-linear-gradient(90deg,#a0a0a0 0 1px,transparent 1px 2px)"></div>
<div class="a" style="left:68px;top:225px;width:10px;height:1px;background:repeating-linear-gradient(90deg,#a0a0a0 0 1px,transparent 1px 2px)"></div>
<div class="a" style="left:48px;top:243px;width:10px;height:1px;background:repeating-linear-gradient(90deg,#a0a0a0 0 1px,transparent 1px 2px)"></div>
<div class="a" style="left:68px;top:261px;width:10px;height:1px;background:repeating-linear-gradient(90deg,#a0a0a0 0 1px,transparent 1px 2px)"></div>
<div class="a" style="left:29px;top:279px;width:10px;height:1px;background:repeating-linear-gradient(90deg,#a0a0a0 0 1px,transparent 1px 2px)"></div>
<div class="a" style="left:48px;top:297px;width:10px;height:1px;background:repeating-linear-gradient(90deg,#a0a0a0 0 1px,transparent 1px 2px)"></div>
<div class="a" style="left:68px;top:315px;width:10px;height:1px;background:repeating-linear-gradient(90deg,#a0a0a0 0 1px,transparent 1px 2px)"></div>
<div class="a" style="left:68px;top:333px;width:10px;height:1px;background:repeating-linear-gradient(90deg,#a0a0a0 0 1px,transparent 1px 2px)"></div>
<div class="a" style="left:68px;top:351px;width:10px;height:1px;background:repeating-linear-gradient(90deg,#a0a0a0 0 1px,transparent 1px 2px)"></div>
<div class="a" style="left:68px;top:369px;width:10px;height:1px;background:repeating-linear-gradient(90deg,#a0a0a0 0 1px,transparent 1px 2px)"></div>
<div class="a" style="left:68px;top:387px;width:10px;height:1px;background:repeating-linear-gradient(90deg,#a0a0a0 0 1px,transparent 1px 2px)"></div>
<div class="a" style="left:48px;top:405px;width:10px;height:1px;background:repeating-linear-gradient(90deg,#a0a0a0 0 1px,transparent 1px 2px)"></div>
<div class="a" style="left:68px;top:423px;width:10px;height:1px;background:repeating-linear-gradient(90deg,#a0a0a0 0 1px,transparent 1px 2px)"></div>
<div class="a" style="left:68px;top:441px;width:10px;height:1px;background:repeating-linear-gradient(90deg,#a0a0a0 0 1px,transparent 1px 2px)"></div>
<div class="a" style="left:48px;top:459px;width:10px;height:1px;background:repeating-linear-gradient(90deg,#a0a0a0 0 1px,transparent 1px 2px)"></div>
<div class="a" style="left:68px;top:477px;width:10px;height:1px;background:repeating-linear-gradient(90deg,#a0a0a0 0 1px,transparent 1px 2px)"></div>
<div class="a" style="left:68px;top:495px;width:10px;height:1px;background:repeating-linear-gradient(90deg,#a0a0a0 0 1px,transparent 1px 2px)"></div>
<div class="a" style="left:48px;top:513px;width:10px;height:1px;background:repeating-linear-gradient(90deg,#a0a0a0 0 1px,transparent 1px 2px)"></div>
<div class="a" style="left:68px;top:531px;width:10px;height:1px;background:repeating-linear-gradient(90deg,#a0a0a0 0 1px,transparent 1px 2px)"></div>
<div class="a" style="left:48px;top:549px;width:10px;height:1px;background:repeating-linear-gradient(90deg,#a0a0a0 0 1px,transparent 1px 2px)"></div>
<div class="a" style="left:68px;top:567px;width:10px;height:1px;background:repeating-linear-gradient(90deg,#a0a0a0 0 1px,transparent 1px 2px)"></div>
<div class="a" style="left:68px;top:585px;width:10px;height:1px;background:repeating-linear-gradient(90deg,#a0a0a0 0 1px,transparent 1px 2px)"></div>
<div class="a" style="left:68px;top:603px;width:10px;height:1px;background:repeating-linear-gradient(90deg,#a0a0a0 0 1px,transparent 1px 2px)"></div>
<div class="a" style="left:68px;top:621px;width:10px;height:1px;background:repeating-linear-gradient(90deg,#a0a0a0 0 1px,transparent 1px 2px)"></div>
<div class="a" style="left:68px;top:639px;width:10px;height:1px;background:repeating-linear-gradient(90deg,#a0a0a0 0 1px,transparent 1px 2px)"></div>
<div class="a" style="left:68px;top:657px;width:10px;height:1px;background:repeating-linear-gradient(90deg,#a0a0a0 0 1px,transparent 1px 2px)"></div>
<div class="a" style="left:68px;top:675px;width:10px;height:1px;background:repeating-linear-gradient(90deg,#a0a0a0 0 1px,transparent 1px 2px)"></div>
<div class="a" style="left:68px;top:693px;width:10px;height:1px;background:repeating-linear-gradient(90deg,#a0a0a0 0 1px,transparent 1px 2px)"></div>
<div class="a" style="left:29px;top:711px;width:10px;height:1px;background:repeating-linear-gradient(90deg,#a0a0a0 0 1px,transparent 1px 2px)"></div>
<div class="a" style="left:48px;top:729px;width:10px;height:1px;background:repeating-linear-gradient(90deg,#a0a0a0 0 1px,transparent 1px 2px)"></div>
<div class="a" style="left:68px;top:747px;width:10px;height:1px;background:repeating-linear-gradient(90deg,#a0a0a0 0 1px,transparent 1px 2px)"></div>
<div class="a" style="left:48px;top:765px;width:10px;height:1px;background:repeating-linear-gradient(90deg,#a0a0a0 0 1px,transparent 1px 2px)"></div>
<div class="a" style="left:44px;top:149px;width:9px;height:9px;background:#fff;border:1px solid #919191"><div class="a" style="left:1px;top:3px;width:5px;height:1px;background:#000"></div></div>
<div class="a" style="left:59px;top:144px;line-height:0"><svg width="16" height="16" viewBox="0 0 16 16"><defs><linearGradient id="fg" x1="0" y1="0" x2="1" y2="1"><stop offset="0" stop-color="#bbb"/><stop offset="1" stop-color="#444"/></linearGradient></defs><rect width="16" height="16" fill="url(#fg)"/><path d="M8 8L3 2Q9 1 8 8ZM8 8L14 3Q15 9 8 8ZM8 8L13 14Q7 15 8 8ZM8 8L2 13Q1 7 8 8Z" fill="#e8e8e8" opacity=".8"/><circle cx="8" cy="8" r="2.3" fill="#111"/></svg></div>
<div class="a" style="left:44px;top:239px;width:9px;height:9px;background:#fff;border:1px solid #919191"><div class="a" style="left:1px;top:3px;width:5px;height:1px;background:#000"></div></div>
<div class="a" style="left:59px;top:235px;line-height:0"><svg width="16" height="14" viewBox="0 0 16 14"><rect width="16" height="14" fill="#111"/><rect x="0.5" y="0.5" width="15" height="13" fill="none" stroke="#555"/><path d="M1 9L3 9L4 5L6 10L8 4L10 9L12 6L14 10L15 8" stroke="#22c422" stroke-width="0.9" fill="none"/></svg></div>
<div class="a" style="left:25px;top:275px;width:9px;height:9px;background:#fff;border:1px solid #919191"><div class="a" style="left:1px;top:3px;width:5px;height:1px;background:#000"></div></div>
<div class="a" style="left:41px;top:270px;line-height:0"><svg width="15" height="15" viewBox="0 0 15 15"><rect x="0" y="0" width="15" height="15" fill="#6a8a20"/><rect x="1.5" y="1.5" width="12" height="12" fill="#d8c020"/><rect x="4" y="4" width="7" height="7" fill="#f4e23a" stroke="#8a6a10" stroke-width="0.8"/></svg></div>
<div class="a" style="left:44px;top:293px;width:9px;height:9px;background:#fff;border:1px solid #919191"><div class="a" style="left:1px;top:3px;width:5px;height:1px;background:#000"></div></div>
<div class="a" style="left:59px;top:290px;line-height:0"><svg width="16" height="12" viewBox="0 0 16 12"><path d="M1 10L6 4L9 8L15 2" stroke="#d8a010" stroke-width="2.2" fill="none"/><path d="M1 10L6 4L9 8L15 2" stroke="#ffe060" stroke-width="0.8" fill="none"/></svg></div>
<div class="a" style="left:63px;top:383px;width:9px;height:9px;background:#fff;border:1px solid #919191"><div class="a" style="left:1px;top:3px;width:5px;height:1px;background:#000"></div><div class="a" style="left:3px;top:1px;width:1px;height:5px;background:#000"></div></div>
<div class="a" style="left:44px;top:401px;width:9px;height:9px;background:#fff;border:1px solid #919191"><div class="a" style="left:1px;top:3px;width:5px;height:1px;background:#000"></div></div>
<div class="a" style="left:59px;top:396px;line-height:0"><svg width="16" height="16" viewBox="0 0 16 16"><path d="M14 1L5 11" stroke="#ccc" stroke-width="3" stroke-linecap="round"/><path d="M10 5L5 11" stroke="#e01010" stroke-width="2.5" stroke-linecap="round"/><circle cx="4" cy="12" r="3" fill="#e01010"/></svg></div>
<div class="a" style="left:63px;top:437px;width:9px;height:9px;background:#fff;border:1px solid #919191"><div class="a" style="left:1px;top:3px;width:5px;height:1px;background:#000"></div><div class="a" style="left:3px;top:1px;width:1px;height:5px;background:#000"></div></div>
<div class="a" style="left:44px;top:455px;width:9px;height:9px;background:#fff;border:1px solid #919191"><div class="a" style="left:1px;top:3px;width:5px;height:1px;background:#000"></div></div>
<div class="a" style="left:60px;top:450px;line-height:0"><svg width="14" height="16" viewBox="0 0 14 16"><path d="M7 1Q9 4 11 5Q13 8 12 11Q10 15 7 15Q3 15 2 11Q1 8 4 5Q4 8 6 8Q5 4 7 1Z" fill="#ff9a3a" stroke="#e06010" stroke-width="1"/><path d="M7 8Q9 10 9 12Q8 14 7 14Q5 14 5 12Q5 10 7 8Z" fill="#fff3c0"/></svg></div>
<div class="a" style="left:44px;top:509px;width:9px;height:9px;background:#fff;border:1px solid #919191"><div class="a" style="left:1px;top:3px;width:5px;height:1px;background:#000"></div></div>
<div class="a" style="left:59px;top:505px;line-height:0"><svg width="16" height="14" viewBox="0 0 16 14"><rect width="16" height="14" fill="#111"/><rect x="0.5" y="0.5" width="15" height="13" fill="none" stroke="#555"/><path d="M1 9L3 9L4 5L6 10L8 4L10 9L12 6L14 10L15 8" stroke="#22c422" stroke-width="0.9" fill="none"/></svg></div>
<div class="a" style="left:63px;top:527px;width:9px;height:9px;background:#fff;border:1px solid #919191"><div class="a" style="left:1px;top:3px;width:5px;height:1px;background:#000"></div><div class="a" style="left:3px;top:1px;width:1px;height:5px;background:#000"></div></div>
<div class="a" style="left:44px;top:545px;width:9px;height:9px;background:#fff;border:1px solid #919191"><div class="a" style="left:1px;top:3px;width:5px;height:1px;background:#000"></div></div>
<div class="a" style="left:59px;top:541px;line-height:0"><svg width="16" height="14" viewBox="0 0 16 14"><path d="M1 13V2H4V13H6V2H9V13H11V2H14V13" stroke="#2a2aa0" stroke-width="1.4" fill="none"/></svg></div>
<div class="a" style="left:25px;top:707px;width:9px;height:9px;background:#fff;border:1px solid #919191"><div class="a" style="left:1px;top:3px;width:5px;height:1px;background:#000"></div></div>
<div class="a" style="left:41px;top:705px;line-height:0"><svg width="16" height="10" viewBox="0 0 16 10"><path d="M1 4L3 1H13L15 4V9H1Z" fill="#888"/><rect x="1" y="4" width="14" height="5" fill="#5a5a5a"/><rect x="1" y="4" width="14" height="1" fill="#aaa"/><rect x="11" y="6" width="2" height="1.5" fill="#2c2"/></svg></div>
<div class="a" style="left:44px;top:725px;width:9px;height:9px;background:#fff;border:1px solid #919191"><div class="a" style="left:1px;top:3px;width:5px;height:1px;background:#000"></div></div>
<div class="a" style="left:59px;top:720px;line-height:0"><svg width="16" height="16" viewBox="0 0 16 16"><path d="M14 1L5 11" stroke="#ccc" stroke-width="3" stroke-linecap="round"/><path d="M10 5L5 11" stroke="#e01010" stroke-width="2.5" stroke-linecap="round"/><circle cx="4" cy="12" r="3" fill="#e01010"/></svg></div>
<div class="a" style="left:44px;top:761px;width:9px;height:9px;background:#fff;border:1px solid #919191"><div class="a" style="left:1px;top:3px;width:5px;height:1px;background:#000"></div></div>
<div class="a" style="left:59px;top:757px;line-height:0"><svg width="16" height="14" viewBox="0 0 16 14"><rect width="16" height="14" fill="#111"/><rect x="0.5" y="0.5" width="15" height="13" fill="none" stroke="#555"/><path d="M1 9L3 9L4 5L6 10L8 4L10 9L12 6L14 10L15 8" stroke="#22c422" stroke-width="0.9" fill="none"/></svg></div>
<div class="a nw" style="left:99px;top:72px;line-height:16px">TMPIN3</div>
<div class="a nw" style="left:248px;top:72px;line-height:16px">26.0 °C</div>
<div class="a nw" style="left:335px;top:72px;line-height:16px">26.0 °C</div>
<div class="a nw" style="left:422px;top:72px;line-height:16px">27.0 °C</div>
<div class="a nw" style="left:99px;top:90px;line-height:16px">TMPIN4</div>
<div class="a nw" style="left:248px;top:90px;line-height:16px">25.0 °C</div>
<div class="a nw" style="left:335px;top:90px;line-height:16px">24.0 °C</div>
<div class="a nw" style="left:422px;top:90px;line-height:16px">25.0 °C</div>
<div class="a nw" style="left:99px;top:108px;line-height:16px">TMPIN5</div>
<div class="a nw" style="left:248px;top:108px;line-height:16px">15.0 °C</div>
<div class="a nw" style="left:335px;top:108px;line-height:16px">15.0 °C</div>
<div class="a nw" style="left:422px;top:108px;line-height:16px">15.0 °C</div>
<div class="a nw" style="left:99px;top:126px;line-height:16px">TMPIN6</div>
<div class="a nw" style="left:248px;top:126px;line-height:16px">23.0 °C</div>
<div class="a nw" style="left:335px;top:126px;line-height:16px">23.0 °C</div>
<div class="a nw" style="left:422px;top:126px;line-height:16px">23.0 °C</div>
<div class="a nw" style="left:80px;top:144px;line-height:16px">Fans</div>
<div class="a nw" style="left:99px;top:162px;line-height:16px">CPUFANIN</div>
<div class="a nw" style="left:248px;top:162px;line-height:16px">664 RPM</div>
<div class="a nw" style="left:335px;top:162px;line-height:16px">632 RPM</div>
<div class="a nw" style="left:422px;top:162px;line-height:16px">769 RPM</div>
<div class="a nw" style="left:99px;top:180px;line-height:16px">AUXFANIN1</div>
<div class="a nw" style="left:248px;top:180px;line-height:16px">1166 RPM</div>
<div class="a nw" style="left:335px;top:180px;line-height:16px">1162 RPM</div>
<div class="a nw" style="left:422px;top:180px;line-height:16px">1193 RPM</div>
<div class="a nw" style="left:99px;top:198px;line-height:16px">CPU</div>
<div class="a nw" style="left:248px;top:198px;line-height:16px">664 RPM</div>
<div class="a nw" style="left:335px;top:198px;line-height:16px">632 RPM</div>
<div class="a nw" style="left:422px;top:198px;line-height:16px">806 RPM</div>
<div class="a nw" style="left:99px;top:216px;line-height:16px">Chassis #3</div>
<div class="a nw" style="left:248px;top:216px;line-height:16px">1169 RPM</div>
<div class="a nw" style="left:335px;top:216px;line-height:16px">1162 RPM</div>
<div class="a nw" style="left:422px;top:216px;line-height:16px">1193 RPM</div>
<div class="a nw" style="left:80px;top:234px;line-height:16px">Utilization</div>
<div class="a nw" style="left:99px;top:252px;line-height:16px">System Memory</div>
<div class="a nw" style="left:248px;top:252px;line-height:16px">33.0 %</div>
<div class="a nw" style="left:335px;top:252px;line-height:16px">33.0 %</div>
<div class="a nw" style="left:422px;top:252px;line-height:16px">33.0 %</div>
<div class="a nw" style="left:61px;top:270px;line-height:16px">Intel Core i9 11900</div>
<div class="a nw" style="left:80px;top:288px;line-height:16px">Voltages</div>
<div class="a nw" style="left:99px;top:306px;line-height:16px">IA Offset</div>
<div class="a nw" style="left:248px;top:306px;line-height:16px">+0.000 V</div>
<div class="a nw" style="left:335px;top:306px;line-height:16px">+0.000 V</div>
<div class="a nw" style="left:422px;top:306px;line-height:16px">+0.000 V</div>
<div class="a nw" style="left:99px;top:324px;line-height:16px">GT Offset</div>
<div class="a nw" style="left:248px;top:324px;line-height:16px">+0.000 V</div>
<div class="a nw" style="left:335px;top:324px;line-height:16px">+0.000 V</div>
<div class="a nw" style="left:422px;top:324px;line-height:16px">+0.000 V</div>
<div class="a nw" style="left:99px;top:342px;line-height:16px">LLC/Ring Offset</div>
<div class="a nw" style="left:248px;top:342px;line-height:16px">+0.000 V</div>
<div class="a nw" style="left:335px;top:342px;line-height:16px">+0.000 V</div>
<div class="a nw" style="left:422px;top:342px;line-height:16px">+0.000 V</div>
<div class="a nw" style="left:99px;top:360px;line-height:16px">System Agent Offset</div>
<div class="a nw" style="left:248px;top:360px;line-height:16px">+0.000 V</div>
<div class="a nw" style="left:335px;top:360px;line-height:16px">+0.000 V</div>
<div class="a nw" style="left:422px;top:360px;line-height:16px">+0.000 V</div>
<div class="a nw" style="left:99px;top:378px;line-height:16px">VID (Max)</div>
<div class="a nw" style="left:248px;top:378px;line-height:16px">1.501 V</div>
<div class="a nw" style="left:335px;top:378px;line-height:16px">1.361 V</div>
<div class="a nw" style="left:422px;top:378px;line-height:16px">1.511 V</div>
<div class="a nw" style="left:80px;top:396px;line-height:16px">Temperatures</div>
<div class="a nw" style="left:99px;top:414px;line-height:16px">Package</div>
<div class="a nw" style="left:248px;top:414px;line-height:16px">26.0 °C</div>
<div class="a nw" style="left:335px;top:414px;line-height:16px">26.0 °C</div>
<div class="a nw" style="left:422px;top:414px;line-height:16px">44.0 °C</div>
<div class="a nw" style="left:99px;top:432px;line-height:16px">Cores (Max)</div>
<div class="a nw" style="left:248px;top:432px;line-height:16px">28.0 °C</div>
<div class="a nw" style="left:335px;top:432px;line-height:16px">26.0 °C</div>
<div class="a nw" style="left:422px;top:432px;line-height:16px">44.0 °C</div>
<div class="a nw" style="left:80px;top:450px;line-height:16px">Powers</div>
<div class="a nw" style="left:99px;top:468px;line-height:16px">Package</div>
<div class="a nw" style="left:248px;top:468px;line-height:16px">13.96 W</div>
<div class="a nw" style="left:335px;top:468px;line-height:16px">11.95 W</div>
<div class="a nw" style="left:422px;top:468px;line-height:16px">41.64 W</div>
<div class="a nw" style="left:99px;top:486px;line-height:16px">IA Cores</div>
<div class="a nw" style="left:248px;top:486px;line-height:16px">5.98 W</div>
<div class="a nw" style="left:335px;top:486px;line-height:16px">3.96 W</div>
<div class="a nw" style="left:422px;top:486px;line-height:16px">33.04 W</div>
<div class="a nw" style="left:80px;top:504px;line-height:16px">Utilization</div>
<div class="a nw" style="left:99px;top:522px;line-height:16px">Processor</div>
<div class="a nw" style="left:248px;top:522px;line-height:16px">0.6 %</div>
<div class="a nw" style="left:335px;top:522px;line-height:16px">0.0 %</div>
<div class="a nw" style="left:422px;top:522px;line-height:16px">5.7 %</div>
<div class="a nw" style="left:80px;top:540px;line-height:16px">Clocks</div>
<div class="a nw" style="left:99px;top:558px;line-height:16px">Core #0</div>
<div class="a nw" style="left:248px;top:558px;line-height:16px">4689 MHz</div>
<div class="a nw" style="left:335px;top:558px;line-height:16px">4687 MHz</div>
<div class="a nw" style="left:422px;top:558px;line-height:16px">4989 MHz</div>
<div class="a nw" style="left:99px;top:576px;line-height:16px">Core #1</div>
<div class="a nw" style="left:248px;top:576px;line-height:16px">4689 MHz</div>
<div class="a nw" style="left:335px;top:576px;line-height:16px">798 MHz</div>
<div class="a nw" style="left:422px;top:576px;line-height:16px">4989 MHz</div>
<div class="a nw" style="left:99px;top:594px;line-height:16px">Core #2</div>
<div class="a nw" style="left:248px;top:594px;line-height:16px">4988 MHz</div>
<div class="a nw" style="left:335px;top:594px;line-height:16px">4687 MHz</div>
<div class="a nw" style="left:422px;top:594px;line-height:16px">4989 MHz</div>
<div class="a nw" style="left:99px;top:612px;line-height:16px">Core #3</div>
<div class="a nw" style="left:248px;top:612px;line-height:16px">4988 MHz</div>
<div class="a nw" style="left:335px;top:612px;line-height:16px">4687 MHz</div>
<div class="a nw" style="left:422px;top:612px;line-height:16px">4989 MHz</div>
<div class="a nw" style="left:99px;top:630px;line-height:16px">Core #4</div>
<div class="a nw" style="left:248px;top:630px;line-height:16px">5187 MHz</div>
<div class="a nw" style="left:335px;top:630px;line-height:16px">4687 MHz</div>
<div class="a nw" style="left:422px;top:630px;line-height:16px">5189 MHz</div>
<div class="a nw" style="left:99px;top:648px;line-height:16px">Core #5</div>
<div class="a nw" style="left:248px;top:648px;line-height:16px">4788 MHz</div>
<div class="a nw" style="left:335px;top:648px;line-height:16px">4689 MHz</div>
<div class="a nw" style="left:422px;top:648px;line-height:16px">5189 MHz</div>
<div class="a nw" style="left:99px;top:666px;line-height:16px">Core #6</div>
<div class="a nw" style="left:248px;top:666px;line-height:16px">4988 MHz</div>
<div class="a nw" style="left:335px;top:666px;line-height:16px">4687 MHz</div>
<div class="a nw" style="left:422px;top:666px;line-height:16px">4989 MHz</div>
<div class="a nw" style="left:99px;top:684px;line-height:16px">Core #7</div>
<div class="a nw" style="left:248px;top:684px;line-height:16px">4788 MHz</div>
<div class="a nw" style="left:335px;top:684px;line-height:16px">4689 MHz</div>
<div class="a nw" style="left:422px;top:684px;line-height:16px">4989 MHz</div>
<div class="a nw" style="left:61px;top:702px;line-height:16px">KINGSTON SNVS500G</div>
<div class="a nw" style="left:80px;top:720px;line-height:16px">Temperatures</div>
<div class="a nw" style="left:99px;top:738px;line-height:16px">Assembly</div>
<div class="a nw" style="left:248px;top:738px;line-height:16px">39.0 °C</div>
<div class="a nw" style="left:335px;top:738px;line-height:16px">39.0 °C</div>
<div class="a nw" style="left:422px;top:738px;line-height:16px">40.0 °C</div>
<div class="a nw" style="left:80px;top:756px;line-height:16px">Utilization</div>
<div class="a" style="left:616px;top:71px;width:16px;height:699px;background:#f0f0f0"></div>
<div class="a" style="left:617px;top:213px;width:14px;height:254px;background:#cdcdcd"></div>
<svg class="a" style="left:619px;top:76px" width="9" height="6" viewBox="0 0 9 6"><path d="M1 5L4.5 1.5L8 5" stroke="#606060" stroke-width="2" fill="none"/></svg>
<svg class="a" style="left:619px;top:759px" width="9" height="6" viewBox="0 0 9 6"><path d="M1 1L4.5 4.5L8 1" stroke="#606060" stroke-width="2" fill="none"/></svg>
<div class="a nw" style="left:3px;top:774px;line-height:16px">Ready</div>
<div class="a nw" style="left:515px;top:774px;width:28px;height:16px;border-top:1px solid #a0a0a0;border-left:1px solid #a0a0a0;line-height:15px;padding-left:1px;letter-spacing:-0.3px"></div>
<div class="a nw" style="left:546px;top:774px;width:33px;height:16px;border-top:1px solid #a0a0a0;border-left:1px solid #a0a0a0;line-height:15px;padding-left:1px;letter-spacing:-0.3px">NUM</div>
<div class="a nw" style="left:582px;top:774px;width:32px;height:16px;border-top:1px solid #a0a0a0;border-left:1px solid #a0a0a0;line-height:15px;padding-left:1px;letter-spacing:-0.3px">SCRL</div>
<svg class="a" style="left:622px;top:779px" width="11" height="11" viewBox="0 0 11 11"><path d="M10 1L1 10M10 5L5 10M10 9L9 10" stroke="#999" stroke-width="1.2"/></svg>
</div>
<!--/HWM-->
<div id="taskbar" class="a">
  <svg class="a" style="left:16px;top:12px" width="17" height="16" viewBox="0 0 17 16"><path d="M0 2.2L7 1.2V7.5H0Z M8 1L17 0V7.5H8Z M0 8.5H7V14.8L0 13.8Z M8 8.5H17V16L8 15Z" fill="#111"/></svg>
  <div class="a" style="left:49px;top:1px;width:287px;height:39px;background:#fff"></div>
  <svg class="a" style="left:59px;top:11px" width="18" height="18" viewBox="0 0 18 18"><circle cx="11" cy="7" r="5.5" stroke="#111" stroke-width="1.3" fill="none"/><path d="M7 11L1 17" stroke="#111" stroke-width="1.4"/></svg>
  <div class="a nw" style="left:88px;top:11px;font-size:15px;line-height:18px;color:#111">Hledat</div>
  <svg class="a" style="left:256px;top:8px" width="80" height="32" viewBox="0 0 80 32"><path d="M0 32Q2 22 14 20Q30 18 48 19Q70 18 80 20V32Z" fill="#5aaee8"/><path d="M8 27L40 1H50L79 25Q60 29 36 28Q20 28 8 27Z" fill="#8c6a3c"/><path d="M40 1H50L58 10Q48 8 38 4Z" fill="#d8a56a"/><path d="M14 24Q30 12 46 14Q64 16 74 22Q50 28 14 24Z" fill="#5c7a3a"/><path d="M20 8Q40 4 70 10" stroke="#e8d8d8" stroke-width="2" fill="none" opacity=".8"/><circle cx="62" cy="20" r="4" fill="#4a8a2a"/><circle cx="68" cy="21" r="3" fill="#3a7a22"/></svg>
  <svg class="a" style="left:351px;top:12px" width="17" height="16" viewBox="0 0 17 16"><rect x="1" y="3" width="10" height="10" stroke="#111" stroke-width="1.3" fill="none"/><path d="M0 1H12M0 15H12M15 1V4M15 6V15" stroke="#111" stroke-width="1.3"/><rect x="13.5" y="4" width="3" height="2" fill="#111"/></svg>
  <!-- explorer -->
  <svg class="a" style="left:400px;top:11px" width="22" height="18" viewBox="0 0 22 18"><path d="M0 2Q0 0 2 0H8L10 2H20Q22 2 22 4V16Q22 18 20 18H2Q0 18 0 16Z" fill="#f8c84a"/><path d="M0 5H22V16Q22 18 20 18H2Q0 18 0 16Z" fill="#ffd966"/><path d="M4 18V12H18V18H14V15H8V18Z" fill="#1b8ce3"/></svg>
  <!-- adobe -->
  <svg class="a" style="left:449px;top:11px" width="23" height="19" viewBox="0 0 23 19"><path d="M0 19L8 0H15L23 19H16L11.5 8L9 19Z" fill="#e8000b"/><path d="M11.5 9L10 19H13Z" fill="#fff"/></svg>
  <!-- firefox -->
  <svg class="a" style="left:497px;top:8px" width="24" height="24" viewBox="0 0 16 17">
    <defs><linearGradient id="ffc" x1="0.85" y1="0" x2="0.35" y2="1"><stop offset="0" stop-color="#fff23a"/><stop offset="0.3" stop-color="#ffc020"/><stop offset="0.6" stop-color="#ff5a2a"/><stop offset="1" stop-color="#e8145a"/></linearGradient>
    <radialGradient id="ffd" cx="0.55" cy="0.35" r="0.7"><stop offset="0" stop-color="#b060ff"/><stop offset="1" stop-color="#4a2ad8"/></radialGradient></defs>
    <path d="M11 0.5Q15.5 4 15.5 9A7.5 7.5 0 0 1 0.5 9.5Q0.5 6 3 3.5Q3 5 4.5 5.5Q6 3 9 3.5Q11 2.5 11 0.5Z" fill="url(#ffc)"/>
    <path d="M6.5 5.5Q9 4.5 10.5 6Q11.5 8 10.5 10Q9 12 7 11.5Q5.5 11 5.5 9.5Q7 9.5 8 8.5Q8 7 6.5 5.5Z" fill="url(#ffd)"/>
  </svg>
  <!-- settings -->
  <svg class="a" style="left:548px;top:11px" width="19" height="19" viewBox="0 0 19 19"><circle cx="9.5" cy="9.5" r="6" stroke="#333" stroke-width="2.6" fill="none"/><path d="M9.5 0.5V3.5M9.5 15.5V18.5M0.5 9.5H3.5M15.5 9.5H18.5M3.1 3.1L5.2 5.2M13.8 13.8L15.9 15.9M3.1 15.9L5.2 13.8M13.8 5.2L15.9 3.1" stroke="#333" stroke-width="3"/></svg>
  <!-- amd -->
  <div class="a" style="left:595px;top:8px;width:24px;height:24px;background:#e4002b"></div>
  <svg class="a" style="left:598px;top:11px" width="18" height="18" viewBox="0 0 18 18"><path d="M5 3H15V13L12 10V6H8Z" fill="#fff"/><path d="M3 15V8L7 5V11H12L9 15Z" fill="#fff"/></svg>
  <!-- dark red app -->
  <div class="a" style="left:645px;top:8px;width:22px;height:24px;background:#8c1515;border:1.5px solid #222;border-radius:3px"></div>
  <svg class="a" style="left:649px;top:12px" width="14" height="16" viewBox="0 0 14 16"><path d="M2 1H12V12H6V7H8V10H10V3H4V9H2Z M2 9H4V14H12V15H2Z" fill="#ddd"/></svg>
  <!-- hwmonitor active -->
  <div class="a" style="left:681px;top:1px;width:48px;height:39px;background:#ececec"></div>
  <div class="a" style="left:693px;top:8px;width:24px;height:24px;background:linear-gradient(#c00,#800)"></div>
  <svg class="a" style="left:697px;top:11px" width="16" height="18" viewBox="0 0 16 18"><path d="M10 1L4 10H8L6 17L12 8H8Z" fill="#fff"/></svg>
  <!-- underlines -->
  <div class="a" style="left:391px;top:38px;width:40px;height:2px;background:#8cc63f"></div>
  <div class="a" style="left:489px;top:38px;width:32px;height:2px;background:#8cc63f"></div>
  <div class="a" style="left:521px;top:38px;width:8px;height:2px;background:#c2e09a"></div>
  <div class="a" style="left:538px;top:38px;width:40px;height:2px;background:#8cc63f"></div>
  <div class="a" style="left:587px;top:38px;width:40px;height:2px;background:#8cc63f"></div>
  <div class="a" style="left:636px;top:38px;width:40px;height:2px;background:#8cc63f"></div>
  <div class="a" style="left:681px;top:38px;width:48px;height:2px;background:#8cc63f"></div>
  <!-- tray -->
  <svg class="a" style="left:2176px;top:12px" width="24" height="16" viewBox="0 0 24 16"><defs><linearGradient id="cl" x1="0" y1="0" x2="0" y2="1"><stop offset="0" stop-color="#d8e8fb"/><stop offset="1" stop-color="#8db6ea"/></linearGradient></defs><path d="M5 16Q0 16 0 12Q0 8 5 8Q6 2 12 2Q18 2 19 8Q24 8 24 12Q24 16 19 16Z" fill="url(#cl)"/></svg>
  <div class="a nw" style="left:2208px;top:11px;font-size:14px;line-height:18px;color:#111">1°C</div>
  <div class="a nw" style="left:2238px;top:11px;font-size:14px;line-height:18px;color:#111">Oblačno</div>
  <svg class="a" style="left:2314px;top:14px" width="14" height="9" viewBox="0 0 14 9"><path d="M1 8L7 1.5L13 8" stroke="#111" stroke-width="1.3" fill="none"/></svg>
  <svg class="a" style="left:2337px;top:14px" width="17" height="11" viewBox="0 0 17 11"><path d="M4 10.5Q0.5 10.5 0.5 7.5Q0.5 4.5 4 4.5Q5 0.5 9 0.5Q13 0.5 13.5 4.5Q16.5 4.5 16.5 7.5Q16.5 10.5 13 10.5Z" fill="#bbb" stroke="#555" stroke-width="1"/></svg>
  <svg class="a" style="left:2361px;top:11px" width="17" height="17" viewBox="0 0 17 17"><rect x="3.5" y="2.5" width="13" height="10" stroke="#111" stroke-width="1.2" fill="none"/><path d="M10 12.5V15.5M6 15.5H14" stroke="#111" stroke-width="1.2"/><rect x="0.5" y="0.5" width="5" height="4" fill="#d6d6d6" stroke="#111" stroke-width="1"/><path d="M3 4.5V13" stroke="#111" stroke-width="1"/></svg>
  <svg class="a" style="left:2385px;top:12px" width="17" height="15" viewBox="0 0 17 15"><path d="M1 5H4L8 1.5V13.5L4 10H1Z" stroke="#111" stroke-width="1.2" fill="none"/><path d="M10.5 5Q12 7.5 10.5 10M12.5 3Q15 7.5 12.5 12M14.5 1Q18 7.5 14.5 14" stroke="#111" stroke-width="1.1" fill="none"/></svg>
  <div class="a nw" style="left:2413px;top:11px;font-size:12.8px;line-height:18px;color:#111">CES</div>
  <div class="a nw" style="left:2460px;top:3px;font-size:12.3px;letter-spacing:-0.3px;line-height:16px;color:#111">19:14</div>
  <div class="a nw" style="left:2447px;top:20px;font-size:12.3px;letter-spacing:-0.4px;line-height:16px;color:#111">04.03.2023</div>
  <svg class="a" style="left:2518px;top:11px" width="26" height="24" viewBox="0 0 26 24"><path d="M2 1H18V13H8L4 17V13H2Z" fill="#111"/><path d="M5 4.5H15M5 7.5H15M5 10H12" stroke="#d6d6d6" stroke-width="1.2"/><circle cx="17.5" cy="16" r="6.5" fill="#d6d6d6" stroke="#555" stroke-width="1"/><text x="15" y="20" font-family="Liberation Sans" font-size="10" fill="#111">1</text></svg>
  <div class="a" style="left:2556px;top:0;width:1px;height:40px;background:#aaa"></div>
</div>
</body></html>
